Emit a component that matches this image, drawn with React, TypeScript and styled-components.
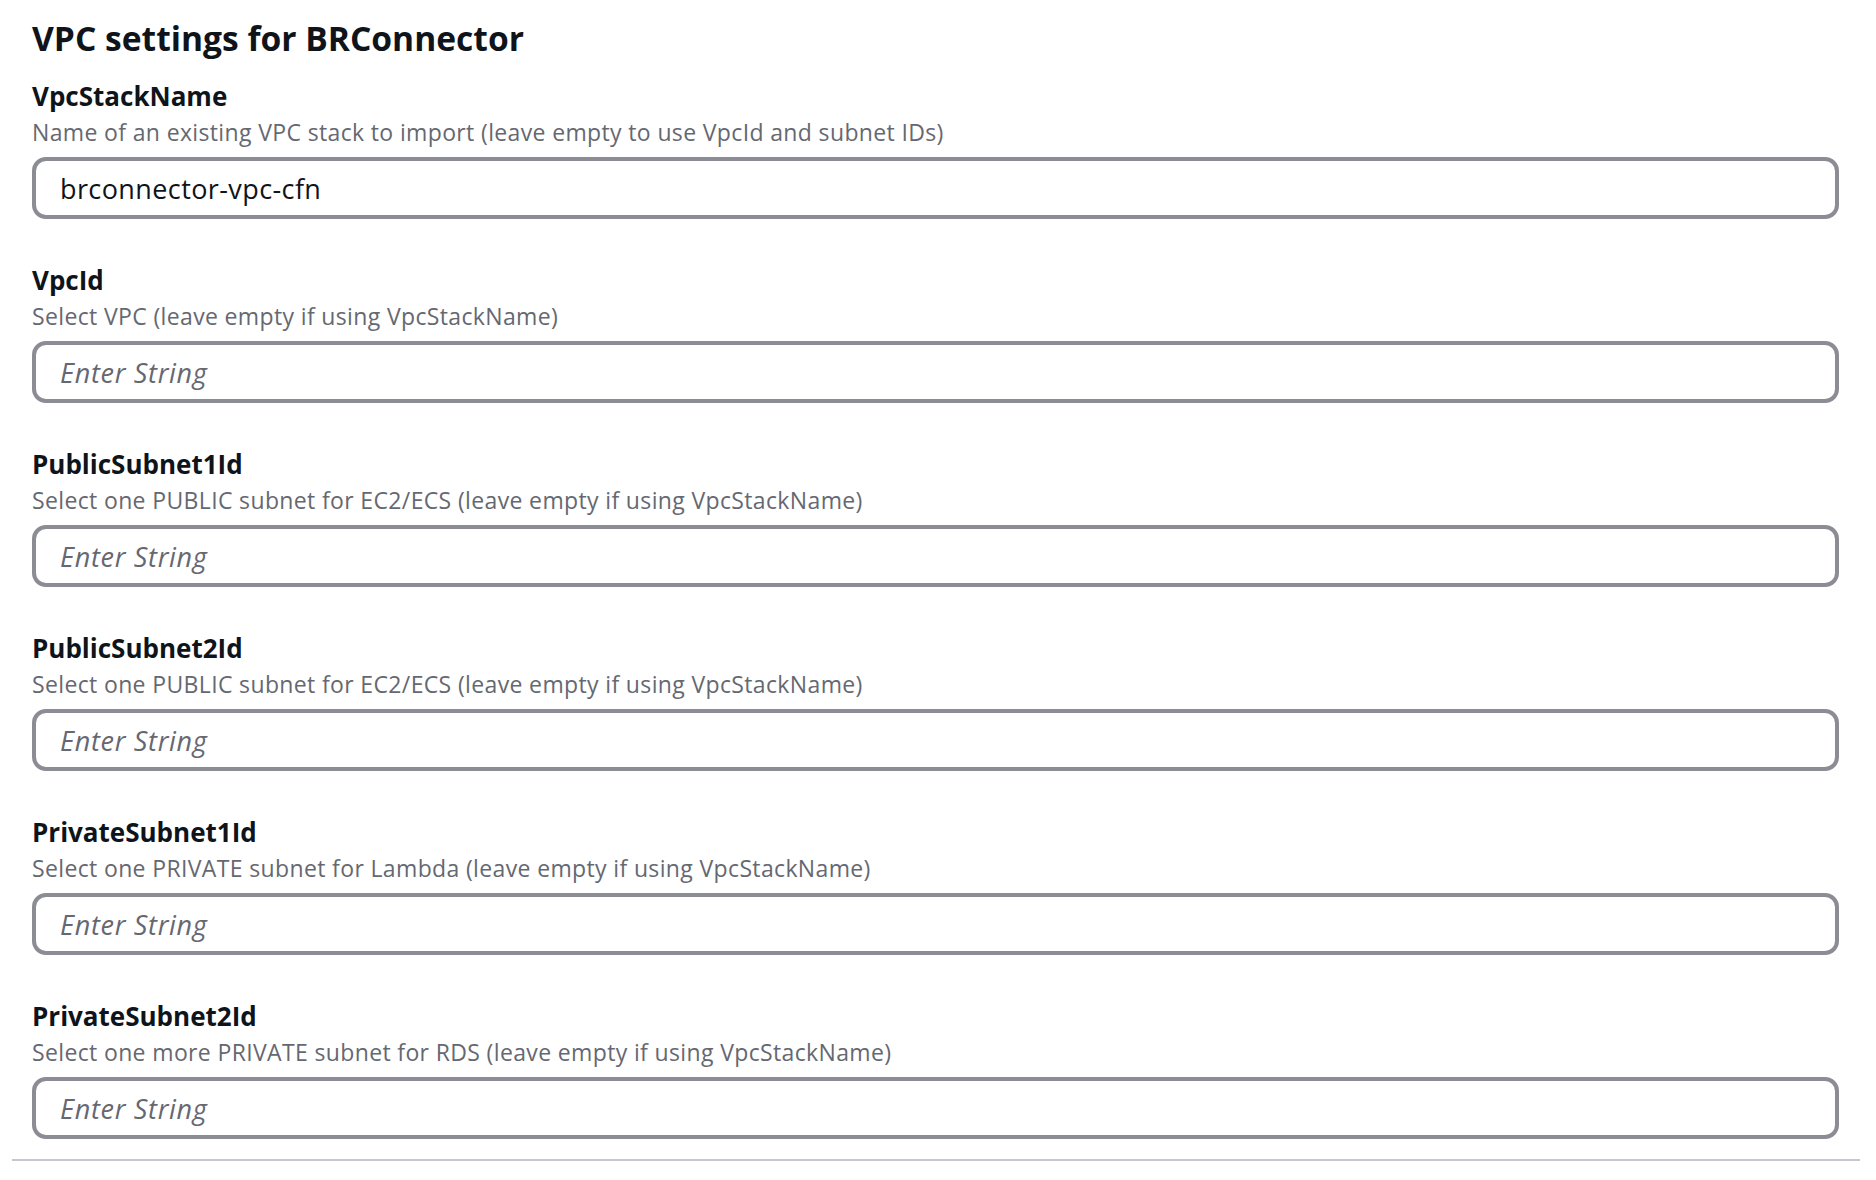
import styled, { createGlobalStyle } from "styled-components";

const GlobalStyle = createGlobalStyle`
    html, body {
        margin: 0;
        padding: 0;
        background: #ffffff;
    }
    body {
        font-family: "Open Sans", "Noto Sans", sans-serif;
        color: #0f141a;
    }
    * {
        box-sizing: border-box;
    }
`

const fields = [
    {
        name: "VpcStackName",
        desc: "Name of an existing VPC stack to import (leave empty to use VpcId and subnet IDs)",
        value: "brconnector-vpc-cfn"
    },
    {
        name: "VpcId",
        desc: "Select VPC (leave empty if using VpcStackName)",
        value: ""
    },
    {
        name: "PublicSubnet1Id",
        desc: "Select one PUBLIC subnet for EC2/ECS (leave empty if using VpcStackName)",
        value: ""
    },
    {
        name: "PublicSubnet2Id",
        desc: "Select one PUBLIC subnet for EC2/ECS (leave empty if using VpcStackName)",
        value: ""
    },
    {
        name: "PrivateSubnet1Id",
        desc: "Select one PRIVATE subnet for Lambda (leave empty if using VpcStackName)",
        value: ""
    },
    {
        name: "PrivateSubnet2Id",
        desc: "Select one more PRIVATE subnet for RDS (leave empty if using VpcStackName)",
        value: ""
    }
]

const App = () => {
    return (
        <Page>
            <GlobalStyle />
            <Section>
                <Inner>
                    <Title>VPC settings for BRConnector</Title>
                    <FieldList>
                        {fields.map((item) => (
                            <Field key={item.name}>
                                <Label htmlFor={item.name}>{item.name}</Label>
                                <Desc>{item.desc}</Desc>
                                <Input
                                    id={item.name}
                                    type="text"
                                    defaultValue={item.value}
                                    placeholder="Enter String"
                                    readOnly
                                />
                            </Field>
                        ))}
                    </FieldList>
                </Inner>
                <Divider />
            </Section>
        </Page>
    )
}

export default App

const Page = styled.div`
    width: 100%;
    min-height: 1180px;
    padding: 0 16px 0 12px;
`

const Section = styled.div`
    display: flex;
    flex-direction: column;
`

const Inner = styled.div`
    display: flex;
    flex-direction: column;
    padding: 16px 21px 0 20px;
`

const Title = styled.h2`
    margin: 0 0 18px;
    font-size: 33.6px;
    line-height: 44px;
    font-weight: 700;
    color: #0f141a;
`

const FieldList = styled.div`
    display: flex;
    flex-direction: column;
    gap: 43px;
`

const Field = styled.div`
    display: flex;
    flex-direction: column;
`

const Label = styled.label`
    font-size: 26px;
    line-height: 36px;
    font-weight: 700;
    color: #0f141a;
`

const Desc = styled.div`
    font-size: 23px;
    line-height: 30px;
    letter-spacing: 0.36px;
    color: #656871;
    margin: 3px 0 10px;
`

const Input = styled.input`
    width: 100%;
    height: 62px;
    border: 4px solid #8c8c94;
    border-radius: 14px;
    padding: 0 24px;
    font-family: "Open Sans", "Noto Sans", sans-serif;
    font-size: 27px;
    letter-spacing: 0.4px;
    color: #0f141a;
    background: #ffffff;
    outline: none;
    &::placeholder {
        color: #656871;
        font-style: italic;
        letter-spacing: 0.7px;
        opacity: 1;
    }
`

const Divider = styled.div`
    height: 2px;
    background: #c6c6cd;
    margin-top: 20px;
`
